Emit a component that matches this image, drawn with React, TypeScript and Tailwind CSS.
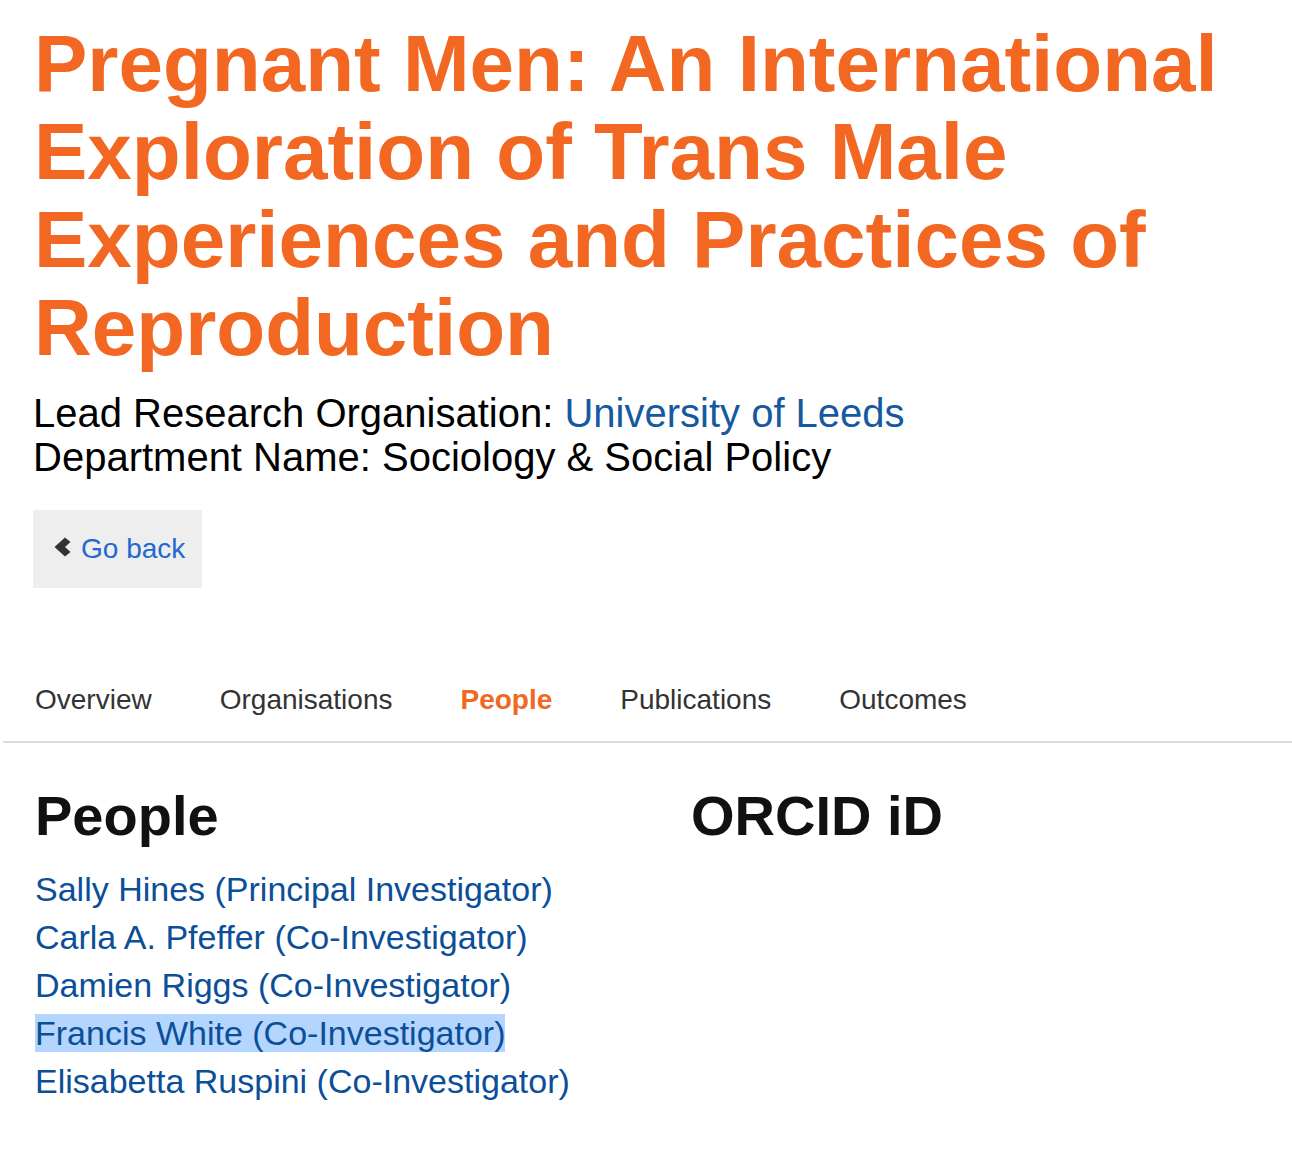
import React from 'react';

const tabs = ['Overview', 'Organisations', 'People', 'Publications', 'Outcomes'];

const people = [
  { name: 'Sally Hines', role: 'Principal Investigator' },
  { name: 'Carla A. Pfeffer', role: 'Co-Investigator' },
  { name: 'Damien Riggs', role: 'Co-Investigator' },
  { name: 'Francis White', role: 'Co-Investigator', selected: true },
  { name: 'Elisabetta Ruspini', role: 'Co-Investigator' },
];

const ChevronLeft: React.FC = () => (
  <svg width="18" height="20" viewBox="0 0 18 20" className="shrink-0">
    <polygon points="12,0.5 17.5,5 12,10 17.5,15 12,19.5 1.5,10" fill="#333" />
  </svg>
);

const App: React.FC = () => {
  return (
    <div className="min-h-[1158px] bg-white font-['Liberation_Sans',Arial,sans-serif]">
      <div className="pl-[34px] pt-[20px]">
        <h1 className="text-[80px] leading-[88px] font-bold text-[#f26722] pr-[20px]">
          Pregnant Men: An International Exploration of Trans Male Experiences and Practices of Reproduction
        </h1>
        <div className="mt-[19px] -ml-[1px] text-[40px] leading-[44px] text-black">
          <p>
            Lead Research Organisation: <a className="text-[#15599f]">University of Leeds</a>
          </p>
          <p>Department Name: Sociology &amp; Social Policy</p>
        </div>
        <button className="mt-[31px] -ml-[1px] flex h-[78px] w-[169px] items-center gap-[10px] bg-[#eeeeee] pl-[20px] text-[28px] text-[#2368d0]">
          <span className="-mt-[4px]">
            <ChevronLeft />
          </span>
          <span>Go back</span>
        </button>
      </div>

      <div className="ml-[3px] mt-[92px] flex border-b-2 border-[#dddddd]">
        {tabs.map((t) => (
          <div
            key={t}
            className={
              'px-[34px] pb-[21px] text-[28px] leading-[40px] first:pl-[32px] ' +
              (t === 'People' ? 'font-bold text-[#f26722]' : 'text-[#333333]')
            }
          >
            {t}
          </div>
        ))}
      </div>

      <div className="grid grid-cols-[656px_1fr] pl-[35px] pt-[42px]">
        <div>
          <h2 className="text-[56px] leading-[62px] font-bold text-[#111111]">People</h2>
          <ul className="mt-[18px] text-[34px] leading-[48px] text-[#0b4f98]">
            {people.map((p) => (
              <li key={p.name}>
                <a className={p.selected ? 'bg-[#b4d5fe]' : ''}>
                  {p.name} ({p.role})
                </a>
              </li>
            ))}
          </ul>
        </div>
        <div>
          <h2 className="text-[56px] leading-[62px] font-bold text-[#111111]">ORCID iD</h2>
        </div>
      </div>
    </div>
  );
};

export default App;
